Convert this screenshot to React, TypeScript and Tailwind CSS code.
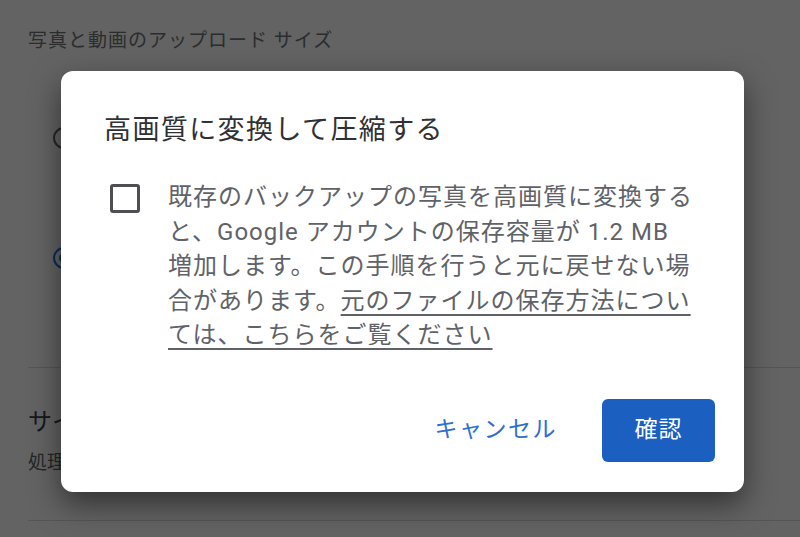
export default function App() {
  return (
    <div className="relative w-[800px] h-[537px] overflow-hidden bg-white font-[Roboto,'Noto_Sans_CJK_JP',sans-serif]">
      {/* background page */}
      <div className="pl-[28px] pt-[29px]">
        <div className="text-[19px] leading-[24px] tracking-[1px] text-[#6f7378]">写真と動画のアップロード サイズ</div>
        <div className="pl-[25px] mt-[74px] flex flex-col gap-[98px]">
          <div className="flex items-center h-[22px]">
            <div className="w-[22px] h-[22px] rounded-full border-[2px] border-[#5f6368]" />
          </div>
          <div className="flex items-center h-[22px]">
            <div className="w-[22px] h-[22px] rounded-full border-[2px] border-[#1a73e8] flex items-center justify-center">
              <div className="w-[10px] h-[10px] rounded-full bg-[#1a73e8]" />
            </div>
          </div>
        </div>
        <div className="mt-[98px] h-px bg-[#dadce0]" />
        <div className="pt-[38px]">
          <div className="text-[24px] leading-[32px] text-[#3c4043]">サイズ</div>
          <div className="mt-[12px] text-[19px] leading-[26px] text-[#5f6368]">処理</div>
        </div>
        <div className="mt-[44px] h-px bg-[#dadce0]" />
      </div>

      {/* scrim */}
      <div className="absolute inset-0 bg-black/[0.61]" />

      {/* dialog */}
      <div className="absolute left-[61px] top-[71px] w-[683px] rounded-[12px] bg-white shadow-[0_12px_30px_rgba(0,0,0,0.5)] pl-[43px] pr-[29px] pt-[41px] pb-[30px]">
        <h2 className="text-[27px] leading-[36px] tracking-[1.4px] text-[#303134] font-normal">高画質に変換して圧縮する</h2>
        <div className="mt-[32px] flex items-start">
          <div className="ml-[6px] mt-[4px] w-[30px] h-[29px] shrink-0 rounded-[3px] border-[3px] border-[#4d4f52]" />
          <p className="ml-[28px] text-[24px] leading-[34.5px] tracking-[1px] text-[#5f6368] whitespace-nowrap">
            既存のバックアップの写真を高画質に変換する
            <br />
            と、Google アカウントの保存容量が 1.2 MB
            <br />
            増加します。この手順を行うと元に戻せない場
            <br />
            合があります。
            <span className="underline decoration-[1.5px] underline-offset-[5px]">
              元のファイルの保存方法につい
              <br />
              ては、こちらをご覧ください
            </span>
          </p>
        </div>
        <div className="mt-[46px] flex justify-end items-center">
          <button className="px-[20px] h-[63px] text-[23px] tracking-[1.5px] text-[#2f6fcf]">キャンセル</button>
          <button className="ml-[25px] w-[113px] h-[63px] rounded-[6px] bg-[#1b5fc1] text-[23px] tracking-[1px] text-white">確認</button>
        </div>
      </div>
    </div>
  );
}
